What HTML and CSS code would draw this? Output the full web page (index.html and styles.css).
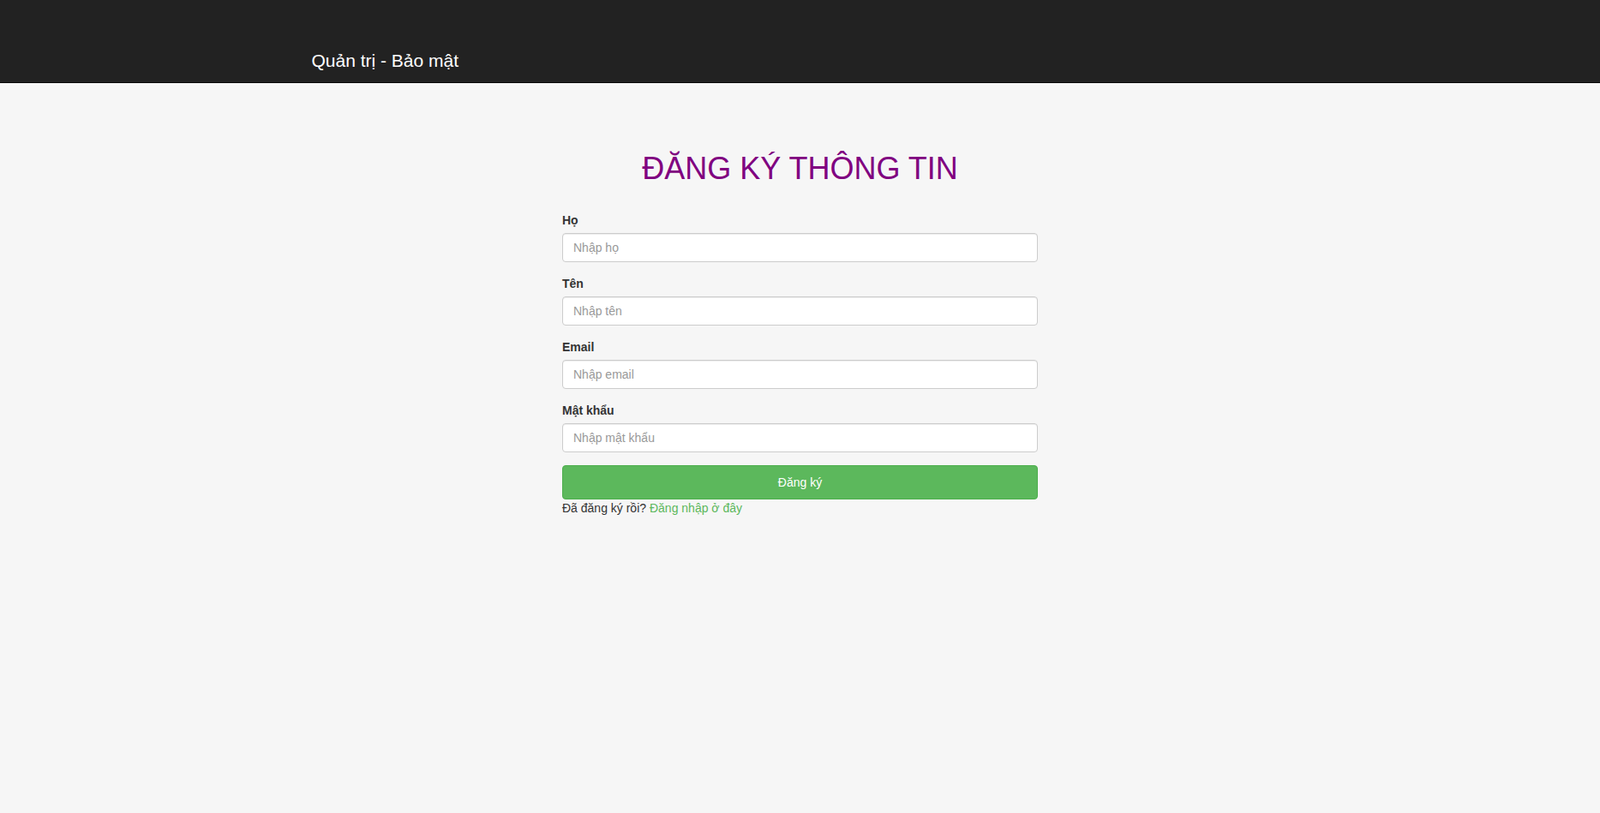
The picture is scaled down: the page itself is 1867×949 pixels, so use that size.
FILE: index.html
```html
<!DOCTYPE html>
<html lang="vi">
<head>
<meta charset="utf-8">
<title>Đăng ký thông tin</title>
<link rel="stylesheet" href="styles.css">
</head>
<body>
<nav class="navbar">
  <div class="nav-container">
    <a class="brand" href="#">Quản trị - Bảo mật</a>
  </div>
</nav>
<main class="page">
  <div class="register">
    <h1 class="title">ĐĂNG KÝ THÔNG TIN</h1>
    <form class="form">
      <div class="form-group">
        <label class="label" for="ho">Họ</label>
        <input class="input" id="ho" type="text" placeholder="Nhập họ">
      </div>
      <div class="form-group">
        <label class="label" for="ten">Tên</label>
        <input class="input" id="ten" type="text" placeholder="Nhập tên">
      </div>
      <div class="form-group">
        <label class="label" for="email">Email</label>
        <input class="input" id="email" type="email" placeholder="Nhập email">
      </div>
      <div class="form-group">
        <label class="label" for="mk">Mật khẩu</label>
        <input class="input" id="mk" type="password" placeholder="Nhập mật khẩu">
      </div>
      <button class="btn-submit" type="button">Đăng ký</button>
      <p class="hint">Đã đăng ký rồi? <a class="link" href="#">Đăng nhập ở đây</a></p>
    </form>
  </div>
</main>
</body>
</html>
```
FILE: styles.css
```css
* { box-sizing: border-box; }
html, body { margin: 0; padding: 0; }
body {
  font-family: "Liberation Sans", Arial, Helvetica, sans-serif;
  font-size: 14px;
  line-height: 20px;
  color: #333;
  background: #f6f6f6;
  min-height: 949px;
}
.navbar {
  background: #222;
  border-bottom: 1px solid #080808;
  height: 97px;
}
.nav-container {
  width: 1170px;
  margin: 0 auto;
  padding: 46px 15px 0;
}
.brand {
  display: inline-block;
  font-size: 21px;
  line-height: 20px;
  padding: 15px 0 15px;
  color: #fff;
  text-decoration: none;
}
.register {
  width: 555px;
  margin: 0 auto;
}
.title {
  margin: 80px 0 30px;
  font-size: 36px;
  line-height: 40px;
  font-weight: 500;
  text-align: center;
  color: #800080;
}
.form { margin: 0; }
.form-group { margin-bottom: 15px; }
.label {
  display: block;
  font-weight: bold;
  margin-bottom: 5px;
  line-height: 20px;
}
.input {
  display: block;
  width: 100%;
  height: 34px;
  padding: 6px 12px;
  font-family: inherit;
  font-size: 14px;
  line-height: 20px;
  color: #555;
  background: #fff;
  border: 1px solid #ccc;
  border-radius: 4px;
  box-shadow: inset 0 1px 1px rgba(0,0,0,.075);
}
.input::placeholder { color: #999; }
.btn-submit {
  display: block;
  width: 100%;
  height: 40px;
  font-family: inherit;
  font-size: 14px;
  color: #fff;
  background: #5cb85c;
  border: 1px solid #4cae4c;
  border-radius: 4px;
  cursor: pointer;
}
.hint { margin: 0; }
.link { color: #5cb85c; text-decoration: none; }
```
